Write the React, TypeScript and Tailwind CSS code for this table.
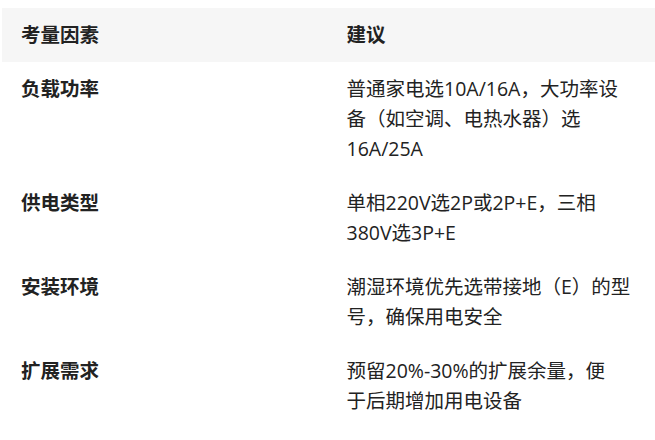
import React from "react";

const rows: [string, string[]][] = [
  ["负载功率", ["普通家电选10A/16A，大功率设", "备（如空调、电热水器）选", "16A/25A"]],
  ["供电类型", ["单相220V选2P或2P+E，三相", "380V选3P+E"]],
  ["安装环境", ["潮湿环境优先选带接地（E）的型", "号，确保用电安全"]],
  ["扩展需求", ["预留20%-30%的扩展余量，便", "于后期增加用电设备"]],
];

export default function App() {
  return (
    <div
      className="w-[655px] h-[440px] overflow-hidden bg-white pt-2 pl-[2px] text-[#222222]"
      style={{ fontFamily: '"Open Sans", "Noto Sans CJK SC", sans-serif' }}
    >
      <table className="w-[653px] table-fixed border-collapse text-[19.5px] leading-[30px]">
        <thead>
          <tr className="bg-[#f6f6f6]">
            <th className="w-1/2 py-3 pl-[19px] pr-2 text-left font-bold align-top">考量因素</th>
            <th className="w-1/2 py-3 pl-[18px] pr-2 text-left font-bold align-top">建议</th>
          </tr>
        </thead>
        <tbody>
          {rows.map(([k, lines]) => (
            <tr key={k}>
              <td className="py-3 pl-[19px] pr-2 font-bold align-top">{k}</td>
              <td className="py-3 pl-[18px] pr-2 align-top">
                {lines.map((l) => (
                  <div key={l} className="whitespace-nowrap">
                    {l}
                  </div>
                ))}
              </td>
            </tr>
          ))}
        </tbody>
      </table>
    </div>
  );
}
